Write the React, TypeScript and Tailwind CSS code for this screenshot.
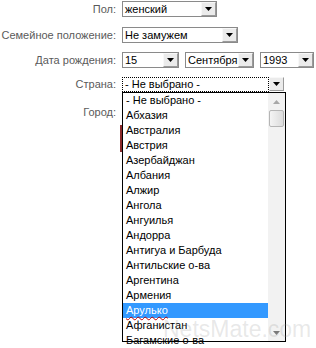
import React from "react";

const Arrow = ({ color = "#000" }: { color?: string }) => (
  <svg width="7" height="4" viewBox="0 0 7 4">
    <path d="M0 0H7L3.5 4Z" fill={color} />
  </svg>
);

const DropBtn = () => (
  <div className="w-[15px] h-[14px] shrink-0 flex items-center justify-center bg-[#ebebeb] border border-t-[#f8f8f8] border-l-[#f8f8f8] border-r-[#9a9a9a] border-b-[#9a9a9a]">
    <Arrow />
  </div>
);

const Select = ({ w, text }: { w: string; text: string }) => (
  <div className={`${w} h-[16px] flex items-center border border-[#8a8a8a] bg-white`}>
    <div className="flex-1 pl-[2px] leading-[14px] text-black truncate">{text}</div>
    <DropBtn />
  </div>
);

const items = [
  "- Не выбрано -",
  "Абхазия",
  "Австралия",
  "Австрия",
  "Азербайджан",
  "Албания",
  "Алжир",
  "Ангола",
  "Ангуилья",
  "Андорра",
  "Антигуа и Барбуда",
  "Антильские о-ва",
  "Аргентина",
  "Армения",
  "Арулько",
  "Афганистан",
  "Багамские о-ва",
];

export default function App() {
  return (
    <div className="relative w-[316px] h-[348px] bg-white overflow-hidden font-['Liberation_Sans',Arial,sans-serif] text-[11px]">
      <div className="flex flex-col pt-[1px]">
        <div className="flex items-center h-[16px]">
          <div className="w-[116px] text-right text-[#5a5a5a]">Пол:</div>
          <div className="ml-[6px]"><Select w="w-[95px]" text="женский" /></div>
        </div>
        <div className="flex items-center h-[16px] mt-[10px]">
          <div className="w-[116px] text-right text-[#5a5a5a]">Семейное положение:</div>
          <div className="ml-[6px]"><Select w="w-[116px]" text="Не замужем" /></div>
        </div>
        <div className="flex items-center h-[16px] mt-[9px]">
          <div className="w-[116px] text-right text-[#5a5a5a]">Дата рождения:</div>
          <div className="ml-[6px] flex gap-[6px]">
            <Select w="w-[57px]" text="15" />
            <Select w="w-[69px]" text="Сентября" />
            <Select w="w-[54px]" text="1993" />
          </div>
        </div>
        <div className="flex items-center h-[16px] mt-[8px]">
          <div className="w-[116px] text-right text-[#5a5a5a]">Страна:</div>
          <div className="ml-[6px] w-[162px] h-[16px] flex items-center">
            <div className="flex-1 h-[15px] border border-dotted border-black pl-[2px] leading-[13px] text-black">- Не выбрано -</div>
            <DropBtn />
          </div>
        </div>
        <div className="flex items-center h-[16px] mt-[12px]">
          <div className="w-[116px] text-right text-[#5a5a5a]">Город:</div>
          <div className="ml-[5px] w-[2px] h-[16px]" />
        </div>
      </div>

      <div className="absolute left-[120px] top-[125px] w-[2px] h-[27px] bg-[#8a2a2a]" />

      <div className="absolute left-[122px] top-[92px] w-[164px] h-[250px] border border-black bg-white flex">
        <div className="flex-1 flex flex-col">
          {items.map((it, i) => (
            <div
              key={it}
              className={`h-[15px] shrink-0 pl-[3px] leading-[15px] ${i === 14 ? "bg-[#3399ff] text-white" : "text-black"} ${i === 0 ? "" : ""}`}
            >
              {i === 14 ? (
                <span className="underline decoration-wavy decoration-[#c00000] decoration-1 underline-offset-2">{it}</span>
              ) : (
                it
              )}
            </div>
          ))}
        </div>
        <div className="w-[17px] h-full bg-[#f2f2f2] flex flex-col items-center">
          <div className="h-[17px] w-full flex items-center justify-center">
            <svg width="7" height="4" viewBox="0 0 7 4"><path d="M0 4H7L3.5 0Z" fill="#a8a8a8" /></svg>
          </div>
          <div className="w-[15px] h-[17px] rounded-[2px] border border-[#b5b5b5] bg-gradient-to-r from-[#f4f4f4] to-[#dcdcdc]" />
          <div className="flex-1" />
          <div className="h-[17px] w-full flex items-center justify-center">
            <Arrow color="#7a7a7a" />
          </div>
        </div>
      </div>

      <div className="absolute left-[163px] top-[316px] text-[23px] leading-[26px] text-[rgba(150,150,150,0.22)] font-['Liberation_Sans',Arial,sans-serif] pointer-events-none">
        NetsMate.com
      </div>
    </div>
  );
}
